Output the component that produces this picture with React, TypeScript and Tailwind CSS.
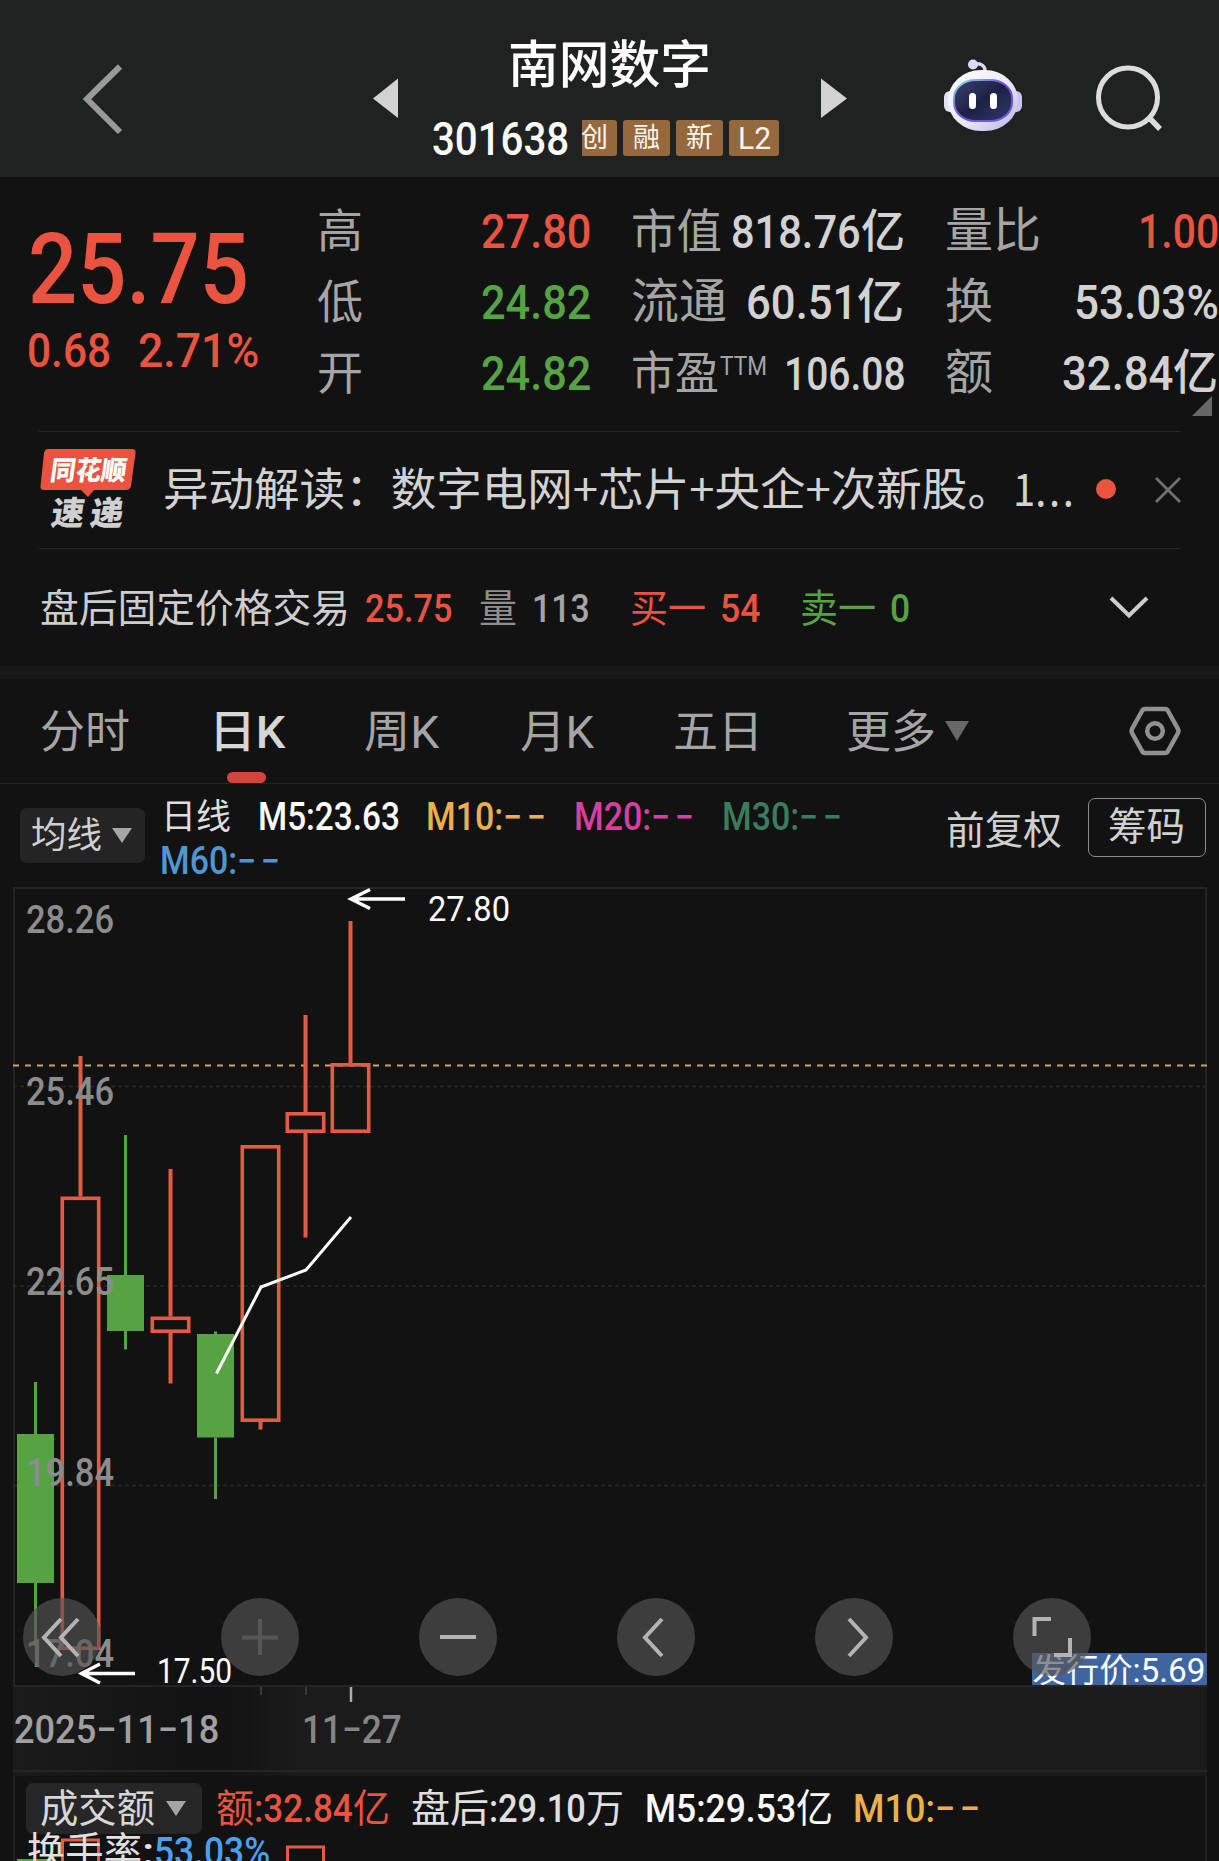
import React, { useLayoutEffect, useRef } from 'react';

interface FitProps {
  className?: string;
  children: React.ReactNode;
}

// Squeezes its text horizontally so it fills the width given in className.
const Fit: React.FC<FitProps> = ({ className = '', children }) => {
  const outer = useRef<HTMLSpanElement>(null);
  const inner = useRef<HTMLSpanElement>(null);

  useLayoutEffect(() => {
    const o = outer.current;
    const i = inner.current;
    if (!o || !i || !i.offsetWidth) return;
    i.style.transform = `scaleX(${o.clientWidth / i.offsetWidth})`;
  }, []);

  return (
    <span ref={outer} className={`block shrink-0 whitespace-nowrap leading-none ${className}`}>
      <span ref={inner} className="inline-block origin-left align-top leading-none">{children}</span>
    </span>
  );
};

const RED = '#e9533f';
const GREEN = '#57a344';

const Robot = () => (
  <svg width="80" height="76" viewBox="0 0 80 76" className="block">
    <defs>
      <linearGradient id="shell" x1="0" y1="0" x2="1" y2="1">
        <stop offset="0" stopColor="#ffffff" />
        <stop offset="0.55" stopColor="#e9e7f8" />
        <stop offset="1" stopColor="#b9b4e6" />
      </linearGradient>
      <linearGradient id="rim" x1="0" y1="0" x2="1" y2="1">
        <stop offset="0" stopColor="#8fe0ee" />
        <stop offset="0.5" stopColor="#7047d8" />
        <stop offset="1" stopColor="#6a63f0" />
      </linearGradient>
      <linearGradient id="visor" x1="0" y1="0" x2="1" y2="1">
        <stop offset="0" stopColor="#3c4270" />
        <stop offset="0.5" stopColor="#1d2244" />
        <stop offset="1" stopColor="#30386a" />
      </linearGradient>
    </defs>
    <path d="M42 14 C43 7 38 4 32 5" fill="none" stroke="#dcdaf4" strokeWidth="3.5" />
    <circle cx="30" cy="5.500" r="5" fill="#dcdaf4" />
    <rect x="1" y="32" width="14" height="21" rx="6" fill="#e3e1f5" />
    <rect x="65" y="32" width="14" height="21" rx="6" fill="#c9c5ec" />
    <rect x="5" y="11" width="70" height="61" rx="33" ry="31" fill="url(#shell)" />
    <rect x="11" y="21" width="58" height="41" rx="22" ry="18" fill="url(#visor)" stroke="url(#rim)" strokeWidth="2" />
    <rect x="26" y="34" width="7" height="16" rx="3.500" fill="#fff" />
    <rect x="47" y="34" width="7" height="16" rx="3.500" fill="#fff" />
  </svg>
);

const Header = () => (
  <header className="flex h-[177px] bg-[#202221]">
    <svg width="373" height="177" className="block shrink-0">
      <path d="M120 66.500 L87 99 L120 132" fill="none" stroke="#999" strokeWidth="6" />
    </svg>
    <svg width="58" height="177" className="block shrink-0">
      <path d="M0 98.500 L25 78.500 V118 Z" fill="#d2d2d2" />
    </svg>
    <div className="flex w-[390px] shrink-0 flex-col">
      <h1 className="mt-[40px] ml-[77px] text-[51px] font-medium text-white">
        <Fit className="w-[203px]">南网数字</Fit>
      </h1>
      <div className="mt-[29px] flex h-[36px] items-center">
        <Fit className="ml-[1px] w-[137px] text-[47px] font-medium text-white">301638</Fit>
        <div className="ml-[13px] flex gap-[6px] text-[27px] leading-none text-[#fdf6ee]">
          <span className="flex h-[36px] w-[35px] items-center rounded-r-[3px] bg-[#96683e] pt-px"><Fit className="-ml-[1px] w-[27px]">创</Fit></span>
          <span className="flex h-[36px] w-[47px] items-center justify-center rounded-[3px] bg-[#96683e] pt-px">融</span>
          <span className="flex h-[36px] w-[47px] items-center justify-center rounded-[3px] bg-[#96683e] pt-px">新</span>
          <span className="flex h-[36px] w-[50px] items-center justify-center rounded-[3px] bg-[#96683e]"><Fit className="w-[33px] text-[31px]">L2</Fit></span>
        </div>
      </div>
    </div>
    <svg width="26" height="177" className="block shrink-0">
      <path d="M26 98.500 L0 78.500 V118 Z" fill="#d2d2d2" />
    </svg>
    <div className="mt-[59px] ml-[96px]"><Robot /></div>
    <svg width="195" height="177" className="block shrink-0">
      <circle cx="105" cy="97.500" r="29.500" fill="none" stroke="#dcdcdc" strokeWidth="5" />
      <path d="M126 117.500 L137 129" stroke="#dcdcdc" strokeWidth="5.500" />
    </svg>
  </header>
);

const Quote = () => (
  <section className="relative grid h-[254px] grid-cols-[317px_316px_314px_272px] text-[48px]">
    <div className="pt-[44px] font-medium text-[#e9533f]">
      <Fit className="ml-[28px] w-[221px] text-[98px]">25.75</Fit>
      <div className="mt-[7px] flex text-[49px]">
        <Fit className="ml-[27px] w-[84px]">0.68</Fit>
        <Fit className="ml-[27px] w-[121px]">2.71%</Fit>
      </div>
    </div>

    <div className="pt-[19px]">
      <div className="flex h-[71px] items-center">
        <Fit className="w-[46px] pb-px text-[46px] text-[#a5a5a5]">高</Fit>
        <Fit className="ml-[118px] w-[110px] font-medium text-[#e9533f]">27.80</Fit>
      </div>
      <div className="flex h-[71px] items-center">
        <Fit className="w-[46px] pb-px text-[46px] text-[#a5a5a5]">低</Fit>
        <Fit className="ml-[118px] w-[110px] font-medium text-[#57a344]">24.82</Fit>
      </div>
      <div className="flex h-[71px] items-center">
        <Fit className="w-[46px] pb-px text-[46px] text-[#a5a5a5]">开</Fit>
        <Fit className="ml-[118px] w-[110px] font-medium text-[#57a344]">24.82</Fit>
      </div>
    </div>

    <div className="pt-[19px] text-[#d2d2d2]">
      <div className="flex h-[71px] items-center">
        <Fit className="-ml-[2px] w-[91px] pb-px text-[47px] text-[#a5a5a5]">市值</Fit>
        <Fit className="ml-[9px] w-[130px] pb-px text-[47px] font-medium">818.76</Fit>
        <Fit className="w-[44px] pb-px text-[46px] font-medium">亿</Fit>
      </div>
      <div className="flex h-[71px] items-center">
        <Fit className="-ml-[2px] w-[96px] pb-px text-[#a5a5a5]">流通</Fit>
        <Fit className="ml-[19px] w-[111px] font-medium">60.51</Fit>
        <Fit className="w-[47px] pb-px font-medium">亿</Fit>
      </div>
      <div className="flex h-[71px] items-center">
        <Fit className="-ml-[2px] w-[88px] pb-px text-[46px] text-[#a5a5a5]">市盈</Fit>
        <Fit className="mb-[15px] ml-[1px] w-[47px] text-[25px] text-[#a5a5a5]">TTM</Fit>
        <Fit className="ml-[17px] w-[122px] text-[47px] font-medium">106.08</Fit>
      </div>
    </div>

    <div className="pt-[19px] text-[#d2d2d2]">
      <div className="flex h-[71px] items-center">
        <Fit className="-ml-[2px] w-[96px] pb-px text-[#a5a5a5]">量比</Fit>
        <Fit className="ml-[97px] w-[81px] font-medium text-[#e9533f]">1.00</Fit>
      </div>
      <div className="flex h-[71px] items-center">
        <Fit className="-ml-[2px] w-[48px] pb-px text-[#a5a5a5]">换</Fit>
        <Fit className="ml-[81px] w-[145px] font-medium">53.03%</Fit>
      </div>
      <div className="flex h-[71px] items-center">
        <Fit className="-ml-[2px] w-[48px] pb-px text-[#a5a5a5]">额</Fit>
        <Fit className="ml-[69px] w-[111px] font-medium">32.84</Fit>
        <Fit className="w-[45px] pb-px font-medium">亿</Fit>
      </div>
    </div>

    <svg width="20" height="20" className="absolute right-[7px] bottom-[15px]">
      <path d="M20 0 V20 H0 Z" fill="#666" />
    </svg>
  </section>
);

const News = () => (
  <section className="mx-[39px] flex h-[118px] items-center border-t border-b border-[#262626]">
    <svg width="98" height="84" viewBox="0 0 98 84" className="mb-[3px] block shrink-0">
      <path d="M9 2 H93 Q97 2 96.500 6 L92 39 Q91 43 87 43 H55 L49 50 L42 43 H5 Q1 43 1.500 39 L5 6 Q6 2 9 2 Z" fill={RED} />
      <g fontFamily="'Noto Sans CJK SC', sans-serif" fontWeight="900" transform="skewX(-8)">
        <text x="15" y="33" fontSize="27" fill="#fff" textLength="76" lengthAdjust="spacingAndGlyphs">同花顺</text>
        <text x="22" y="78" fontSize="33" fill="#d0d0d0" textLength="72" lengthAdjust="spacing">速递</text>
      </g>
    </svg>
    <div className="ml-[26px] flex pb-[8px] font-['Noto_Sans_CJK_SC',sans-serif] text-[45px] text-[#d2d2d2]">
      <Fit className="w-[850px]">异动解读：数字电网+芯片+央企+次新股。</Fit>
      <Fit className="w-[64px]">1<i className="not-italic tracking-[3px]">...</i></Fit>
    </div>
    <span className="mb-[3px] ml-[19px] h-[20px] w-[20px] shrink-0 rounded-full bg-[#e9533f]" />
    <svg width="26" height="26" className="mb-px ml-[39px] block shrink-0">
      <path d="M1 1 L25 25 M25 1 L1 25" stroke="#707070" strokeWidth="2.800" />
    </svg>
  </section>
);

const AfterHours = () => (
  <section className="flex h-[117px] items-center pt-[3px] text-[39px] text-[#cdcdcd]">
    <Fit className="ml-[40px] w-[310px]">盘后固定价格交易</Fit>
    <Fit className="ml-[15px] w-[88px] pt-px font-medium text-[#e9533f]">25.75</Fit>
    <Fit className="ml-[26px] w-[38px] text-[#8f8f8f]">量</Fit>
    <Fit className="ml-[15px] w-[58px] pt-px font-medium text-[#a5a5a5]">113</Fit>
    <Fit className="ml-[40px] w-[76px] text-[#e9533f]">买一</Fit>
    <Fit className="ml-[14px] w-[40px] pt-px font-medium text-[#e9533f]">54</Fit>
    <Fit className="ml-[40px] w-[76px] text-[#57a344]">卖一</Fit>
    <Fit className="ml-[14px] w-[20px] pt-px font-medium text-[#57a344]">0</Fit>
    <svg width="40" height="26" className="ml-[199px] block shrink-0">
      <path d="M2 2 L20 19.500 L38 2" fill="none" stroke="#cdcdcd" strokeWidth="4" />
    </svg>
  </section>
);

const Tabs = () => (
  <nav className="relative flex h-[105px] items-center border-b border-[#242424] text-[45px] text-[#a5a5a5]">
    <Fit className="ml-[40px] w-[90px] pt-[3px]">分时</Fit>
    <Fit className="ml-[79px] w-[76px] pt-[3px] font-medium text-[#d6d6d6]">日K</Fit>
    <Fit className="ml-[79px] w-[75px] pt-[3px]">周K</Fit>
    <Fit className="ml-[81px] w-[74px] pt-[3px]">月K</Fit>
    <Fit className="ml-[79px] w-[90px] pt-[3px]">五日</Fit>
    <Fit className="ml-[83px] w-[90px] pt-[3px]">更多</Fit>
    <svg width="26" height="22" className="ml-[8px] block shrink-0">
      <path d="M1 1 H25 L13 21 Z" fill="#686868" />
    </svg>
    <svg width="54" height="52" className="ml-[158px] block shrink-0">
      <path d="M17 4 H37 Q39 4 40 6 L50 24 Q51 26 50 28 L40 46 Q39 48 37 48 H17 Q15 48 14 46 L4 28 Q3 26 4 24 L14 6 Q15 4 17 4 Z" fill="none" stroke="#919191" strokeWidth="4.500" />
      <circle cx="27" cy="26" r="7.800" fill="none" stroke="#919191" strokeWidth="4.500" />
    </svg>
    <span className="absolute bottom-0 left-[227px] h-[11px] w-[39px] rounded-full bg-[#d4443b]" />
  </nav>
);

const Averages = () => (
  <section className="flex h-[103px] text-[38px] font-medium">
    <button type="button" className="mt-[24px] ml-[20px] flex h-[55px] w-[125px] items-center rounded-[7px] bg-[#242424] font-normal text-[#d0d0d0]">
      <Fit className="ml-[11px] w-[71px] pt-px text-[36px]">均线</Fit>
      <svg width="20" height="15" className="ml-[10px] block"><path d="M0 0 H20 L10 15 Z" fill="#a5a5a5" /></svg>
    </button>
    <div className="w-[783px] pt-[13px]">
      <div className="flex">
        <Fit className="ml-[16px] w-[70px] pt-[3px] text-[35px] font-normal text-[#dedede]">日线</Fit>
        <Fit className="ml-[27px] w-[142px] pt-px text-white">M5:23.63</Fit>
        <Fit className="ml-[26px] w-[124px] pt-px text-[#eab04c]">M10:<i className="not-italic tracking-[5px]">−−</i></Fit>
        <Fit className="ml-[24px] w-[124px] pt-px text-[#d63fa0]">M20:<i className="not-italic tracking-[5px]">−−</i></Fit>
        <Fit className="ml-[24px] w-[124px] pt-px text-[#3a7d5c]">M30:<i className="not-italic tracking-[5px]">−−</i></Fit>
      </div>
      <Fit className="mt-[6px] ml-[15px] w-[124px] text-[#4f97d1]">M60:<i className="not-italic tracking-[5px]">−−</i></Fit>
    </div>
    <Fit className="mt-[28px] ml-[18px] w-[116px] text-[39px] font-normal text-[#d0d0d0]">前复权</Fit>
    <button type="button" className="mt-[14px] ml-[26px] flex h-[59px] w-[118px] items-center rounded-[7px] border border-[#8c8c8c] font-normal text-[#d0d0d0]">
      <Fit className="ml-[19px] w-[77px] text-[39px]">筹码</Fit>
    </button>
  </section>
);

interface Candle {
  x: number;
  high: number;
  top: number;
  bottom: number;
  low: number;
  up: boolean;
}

// y values are pixels below the top of the chart
const candles: Candle[] = [
  { x: 35.5, high: 495, top: 547, bottom: 696, low: 759, up: false },
  { x: 80.5, high: 169, top: 309.5, bottom: 763, low: 763, up: true },
  { x: 125.5, high: 248, top: 388, bottom: 444, low: 462.5, up: false },
  { x: 170.5, high: 282, top: 429.5, bottom: 446, low: 496.5, up: true },
  { x: 215.5, high: 444.5, top: 447, bottom: 550.5, low: 612, up: false },
  { x: 260.5, high: 258, top: 258, bottom: 535, low: 542.5, up: true },
  { x: 305.5, high: 128, top: 225, bottom: 246, low: 350.5, up: true },
  { x: 350.5, high: 34, top: 176, bottom: 246, low: 246, up: true },
];

const scale = [
  { label: '28.26', y: 46 },
  { label: '25.46', y: 218 },
  { label: '22.65', y: 408 },
  { label: '19.84', y: 599 },
  { label: '17.04', y: 780 },
];

const controls = [
  { id: 'first', d: 'M38 21 L21 39.500 L38 58 M55 21 L38 39.500 L55 58', color: '#b4b4b4' },
  { id: 'zoomIn', d: 'M21 39.500 H57 M39 21 V57', color: '#565656' },
  { id: 'zoomOut', d: 'M21 39 H57', color: '#b4b4b4' },
  { id: 'prev', d: 'M45 21 L28 39.500 L45 58', color: '#b4b4b4' },
  { id: 'next', d: 'M34 21 L51 39.500 L34 58', color: '#b4b4b4' },
  { id: 'full', d: 'M38 21 H21.500 V38 M41 57 H57 V40', color: '#b4b4b4' },
];

const Chart = () => (
  <section className="relative h-[798px]">
    <svg width="1219" height="800" className="block overflow-visible" fontFamily="Roboto, 'Noto Sans CJK SC', sans-serif">
      <rect x="14" y="1" width="1192" height="798" fill="none" stroke="#242424" strokeWidth="2" />
      {[199.5, 399, 598.5].map(y => (
        <path key={y} d={`M13 ${y} H1206`} stroke="#292929" strokeWidth="1.5" strokeDasharray="4 3" />
      ))}
      <path d="M13 178.500 H1207" stroke="#c9a468" strokeWidth="2" strokeDasharray="6 6" />
      {candles.map(c => (
        <g key={c.x}>
          <path
            d={`M${c.x} ${c.high} V${c.top} M${c.x} ${c.bottom} V${c.low}`}
            stroke={c.up ? '#e35a45' : GREEN}
            strokeWidth={c.up ? 4 : 3}
          />
          {c.up ? (
            <rect x={c.x - 18.2} y={c.top + 1.8} width="36.4" height={c.bottom - c.top - 3.6} fill="none" stroke="#e35a45" strokeWidth="3.6" />
          ) : (
            <rect x={c.x - 18.5} y={c.top} width="37" height={c.bottom - c.top} fill={GREEN} />
          )}
        </g>
      ))}
      {scale.map(s => (
        <text key={s.label} x="26" y={s.y} fontSize="39" fontWeight="500" fill="#8c8c8c" textLength="88" lengthAdjust="spacingAndGlyphs">{s.label}</text>
      ))}
      <path d="M216.500 486.500 L261 400 L306 383 L351 330" fill="none" stroke="#fff" strokeWidth="3" />
      <path d="M405 12 H352 M370 2.500 L351 12 L370 21.500" fill="none" stroke="#fff" strokeWidth="3.500" />
      <text x="428" y="34" fontSize="35" fill="#fff" textLength="82" lengthAdjust="spacingAndGlyphs">27.80</text>
      <path d="M135 786.500 H82 M100 777 L81.500 786.500 L100 796" fill="none" stroke="#fff" strokeWidth="3.500" />
      <text x="157" y="796" fontSize="35" fill="#fff" textLength="75" lengthAdjust="spacingAndGlyphs">17.50</text>
      <rect x="1032" y="766" width="175" height="33" fill="#3f65a0" />
      <text x="1032.500" y="795" fontSize="33" fill="#fff" textLength="173" lengthAdjust="spacingAndGlyphs">发行价:5.69</text>
    </svg>
    <div className="absolute bottom-[9px] left-[23px] flex gap-[120px]">
      {controls.map(c => (
        <button key={c.id} type="button" className="h-[78px] w-[78px] rounded-full bg-[#555]/65">
          <svg width="78" height="78" className="block"><path d={c.d} fill="none" stroke={c.color} strokeWidth="4" /></svg>
        </button>
      ))}
    </div>
  </section>
);

const DateAxis = () => (
  <section className="relative mr-[12px] ml-[13px] flex h-[91px] border-t-2 border-[#242424] bg-[linear-gradient(90deg,#1b1b1b_0,#131313_170px,#131313_215px,#1b1b1b_290px)] pt-[24px] text-[39px] font-medium">
    <Fit className="ml-[1px] w-[205px] text-[#a0a0a0]">2025−11−18</Fit>
    <Fit className="ml-[83px] w-[100px] text-[#858585]">11−27</Fit>
    <svg width="400" height="18" className="absolute top-0 left-0">
      <path d="M248 0 V8 M293 0 V8" stroke="#444" strokeWidth="1.5" />
      <path d="M338 0 V15" stroke="#aaa" strokeWidth="2.5" />
    </svg>
    <span className="absolute inset-x-0 bottom-[4px] h-[2px] bg-[#252525]" />
  </section>
);

const Turnover = () => (
  <section className="relative mr-[12px] ml-[13px] h-[85px] overflow-hidden border-x-2 border-[#222] text-[39px] font-medium">
    <svg width="400" height="85" className="absolute top-0 left-0">
      <rect x="2" y="83" width="37" height="8" fill={GREEN} />
      <rect x="47.500" y="64" width="36" height="40" fill="none" stroke="#e35a45" strokeWidth="3" />
      <rect x="272.500" y="71" width="36" height="40" fill="none" stroke="#e35a45" strokeWidth="3" />
    </svg>
    <div className="relative flex pt-[7px]">
      <button type="button" className="ml-[11px] flex h-[51px] w-[176px] items-center rounded-[7px] bg-[#262626] font-normal text-[#d6d6d6]">
        <Fit className="ml-[14px] w-[115px] pt-[2px]">成交额</Fit>
        <svg width="20" height="15" className="ml-[11px] block"><path d="M0 0 H20 L10 15 Z" fill="#a5a5a5" /></svg>
      </button>
      <div className="flex pt-[7px]">
        <Fit className="ml-[14px] w-[38px] font-normal text-[#e9533f]">额</Fit>
        <Fit className="w-[99px] text-[#e9533f]">:32.84</Fit>
        <Fit className="w-[37px] font-normal text-[#e9533f]">亿</Fit>
        <Fit className="ml-[21px] w-[78px] font-normal text-[#e0e0e0]">盘后</Fit>
        <Fit className="w-[97px] text-[#e0e0e0]">:29.10</Fit>
        <Fit className="w-[38px] font-normal text-[#e0e0e0]">万</Fit>
        <Fit className="ml-[21px] w-[151px] text-white">M5:29.53</Fit>
        <Fit className="w-[37px] font-normal text-white">亿</Fit>
        <Fit className="ml-[20px] w-[132px] text-[#eab04c]">M10:<i className="not-italic tracking-[5px]">−−</i></Fit>
      </div>
    </div>
    <div className="relative -mt-px flex">
      <Fit className="ml-[12px] w-[115px] font-normal text-[#e0e0e0]">换手率</Fit>
      <Fit className="w-[12px] text-[#e0e0e0]">:</Fit>
      <Fit className="w-[116px] text-[#4c9ff0]">53.03%</Fit>
    </div>
  </section>
);

export default function App() {
  return (
    <div className="h-[1861px] w-[1219px] overflow-hidden bg-[#121212] font-[Roboto,'Noto_Sans_CJK_SC',sans-serif]">
      <Header />
      <Quote />
      <News />
      <AfterHours />
      <div className="h-[13px] bg-[#181818]" />
      <Tabs />
      <Averages />
      <Chart />
      <DateAxis />
      <Turnover />
    </div>
  );
}
